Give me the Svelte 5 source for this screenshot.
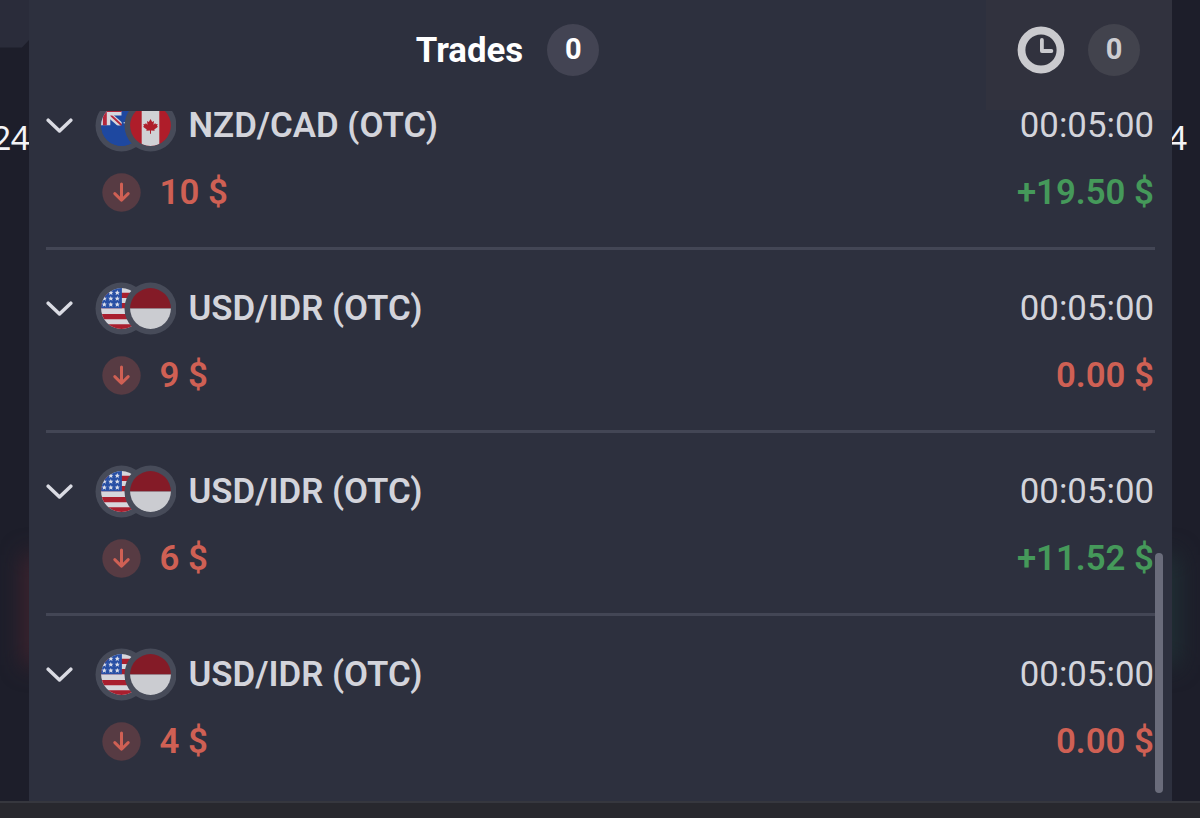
<script>
  const trades = [
    { pair: 'NZD/CAD (OTC)', flags: ['nz', 'ca'], time: '00:05:00', amount: '10 $', result: '+19.50 $', won: true },
    { pair: 'USD/IDR (OTC)', flags: ['us', 'id'], time: '00:05:00', amount: '9 $', result: '0.00 $', won: false },
    { pair: 'USD/IDR (OTC)', flags: ['us', 'id'], time: '00:05:00', amount: '6 $', result: '+11.52 $', won: true },
    { pair: 'USD/IDR (OTC)', flags: ['us', 'id'], time: '00:05:00', amount: '4 $', result: '0.00 $', won: false }
  ];
  const stars = [0, 1, 2].flatMap((r) => [0, 1, 2].map((c) => ({ x: 104.8 + c * 6.5, y: 292.2 + r * 5.9 })));
</script>

<div class="screen">
  <div class="main">
    <aside class="side left">
      <div class="tab"><svg width="29" height="48" viewBox="0 0 29 48"><path d="M0 0H29V40L22 47.5H0Z" fill="#2a2c3a" /></svg></div>
      <span class="axis">24</span>
      <div class="glow red"></div>
    </aside>

    <section class="panel">
      <header>
        <div class="title"><h1>Trades</h1><span class="count">0</span></div>
        <div class="pending">
          <svg width="48" height="48" viewBox="0 0 48 48">
            <circle cx="24" cy="24" r="19.5" fill="none" stroke="#cacace" stroke-width="7.8" />
            <path d="M24.9 14V25H34.4" fill="none" stroke="#cacace" stroke-width="3.8" stroke-linecap="round" stroke-linejoin="round" />
          </svg>
          <span class="count dim">0</span>
        </div>
      </header>

      <div class="viewport">
        <ul>
          {#each trades as t, i}
            <li>
              <div class="line top">
                <svg class="chevron" width="28" height="16" viewBox="0 0 28 16"><path d="M2.2 2.2L13.5 13L24.8 2.2" fill="none" stroke="#dadbe3" stroke-width="3.5" stroke-linecap="round" stroke-linejoin="round" /></svg>
                <svg class="flags" width="81" height="53" viewBox="95.5 281.5 81 53">
                  <defs>
                    <clipPath id="l{i}"><circle cx="122" cy="308" r="20.4" /></clipPath>
                    <clipPath id="r{i}"><circle cx="151" cy="308" r="20.4" /></clipPath>
                  </defs>
                  <circle cx="122" cy="308" r="26" fill="#474b59" />
                  <g clip-path="url(#l{i})">
                    {#if t.flags[0] === 'us'}
                      <path d="M101 287h42v42h-42z" fill="#d6d6dc" />
                      <path d="M101 292.2h42v5.2h-42zM101 302.6h42v5.2h-42zM101 313.4h42v5.3h-42zM101 323.8h42v5.2h-42z" fill="#a91f2f" />
                      <path d="M101 287h21.4v20.8H101z" fill="#2950a5" />
                      {#each stars as s}
                        <path transform="translate({s.x} {s.y})" d="M0-2.6L.75-.9L2.6-.8L1.2.35L1.65 2.2L0 1.2L-1.65 2.2L-1.2.35L-2.6-.8L-.75-.9Z" fill="#d9dce8" />
                      {/each}
                    {:else}
                      <path d="M101 287h42v42h-42z" fill="#1e48a0" />
                      <path d="M107 295L123 309" stroke="#d6d6dc" stroke-width="5.6" />
                      <path d="M110 296.5L124 309.5" stroke="#b5283c" stroke-width="1.8" />
                      <path d="M101 293.5h21.2v4.4H101zM101 287h9.8v21h-9.8z" fill="#d6d6dc" />
                      <path d="M101 290h21.2v4.6H101zM103.4 287h3.9v21h-3.9z" fill="#b5283c" />
                      <path d="M122.2 287h21v42h-21zM101 308h42v21h-42z" fill="#1e48a0" />
                      <circle cx="124.8" cy="305.3" r=".8" fill="#d6d6dc" />
                    {/if}
                  </g>
                  <circle cx="151" cy="308" r="26" fill="#474b59" />
                  <g clip-path="url(#r{i})">
                    {#if t.flags[1] === 'id'}
                      <path d="M130 287h42v21h-42z" fill="#841b27" />
                      <path d="M130 308h42v21h-42z" fill="#cbccd1" />
                    {:else}
                      <path d="M130 287h42v42h-42z" fill="#af1d2a" />
                      <path d="M142.2 287h17.6v42h-17.6z" fill="#d0d1d5" />
                      <path d="M151 301.4l1.7 3 1.8-.8-.5 3.6 1.8-1.7.4 1.3 2-.3-.7 2 1 .7-3.7 2.8.4 1.3-3.7-.4v3.4h-1v-3.4l-3.7.4.4-1.3-3.7-2.8 1-.7-.7-2 2 .3.4-1.3 1.8 1.7-.5-3.6 1.8.8z" fill="#af1d2a" />
                    {/if}
                  </g>
                </svg>
                <span class="pair">{t.pair}</span>
                <span class="time">{t.time}</span>
              </div>
              <div class="line bottom">
                <svg class="arrow" width="39" height="39" viewBox="0 0 39 39"><circle cx="19.5" cy="19.5" r="19.2" fill="#573b43" /><path d="M19.5 11V27M12.8 20.6L19.5 27.2L26.2 20.6" fill="none" stroke="#cf6054" stroke-width="3" stroke-linecap="round" stroke-linejoin="round" /></svg>
                <span class="amount">{t.amount}</span>
                <span class="result" class:won={t.won}>{t.result}</span>
              </div>
            </li>
          {/each}
        </ul>
        <div class="scrollbar"></div>
      </div>
    </section>

    <aside class="side right">
      <span class="axis">4</span>
      <div class="glow green"></div>
    </aside>
  </div>
  <footer></footer>
</div>

<style>
  :global(body) { margin: 0; background: #1d1e2a; }
  .screen { width: 1200px; height: 818px; display: flex; flex-direction: column; overflow: hidden; font-family: Roboto, sans-serif; }
  .main { height: 801px; display: grid; grid-template-columns: 29px 1143px 28px; }
  footer { flex: 1; background: #28282e; border-top: 2px solid #36373e; box-sizing: border-box; }
  .side { position: relative; overflow: hidden; background: #1d1e2a; display: flex; flex-direction: column; }
  .left { align-items: flex-end; }
  .tab { height: 48px; }
  .tab svg { display: block; }
  .axis { color: #f4f4f7; font: 400 33.5px/40px "Noto Sans", sans-serif; letter-spacing: -0.8px; margin-top: 69px; }
  .right .axis { margin: 117px 0 0 -4px; }
  .glow { position: absolute; width: 20px; height: 110px; top: 555px; filter: blur(12px); }
  .glow.red { left: 25px; background: #48242e; }
  .glow.green { right: 24px; background: #213638; }
  .panel { background: #2d303e; display: flex; flex-direction: column; min-width: 0; }
  header { height: 111px; display: flex; justify-content: space-between; }
  .title { width: 957px; height: 100px; display: flex; align-items: center; justify-content: center; gap: 24px; }
  h1 { margin: 0; color: #fff; font-size: 34.8px; font-weight: 700; line-height: 41px; }
  .count { width: 52px; height: 52px; border-radius: 50%; background: #434453; color: #fff; font-size: 29px; font-weight: 700; line-height: 51px; text-align: center; }
  .count.dim { background: #42434d; color: #cdcdd1; }
  .pending { width: 186px; height: 110px; padding: 0 32px 10px 31px; box-sizing: border-box; background: #31323e; display: flex; align-items: center; justify-content: space-between; }
  .viewport { position: relative; flex: 1; overflow: hidden; }
  ul { list-style: none; margin: -44px 17px 0; padding: 0; }
  li { height: 183px; box-sizing: border-box; padding: 31px 1px 0 0; border-bottom: 3px solid #434655; }
  li:last-child { border-color: transparent; }
  .line { display: flex; align-items: center; white-space: nowrap; font-size: 34.8px; }
  .top { height: 54px; }
  .chevron, .flags { margin-top: 1px; }
  .bottom { height: 40px; margin-top: 20px; padding-left: 56.4px; }
  .arrow { margin-top: 1px; }
  .flags { margin-left: 21.3px; }
  .pair { margin-left: 12.2px; color: #d3d4db; font-weight: 600; }
  .time, .result { margin-left: auto; }
  .time { color: #d3d4db; font-weight: 400; }
  .amount { margin-left: 18.2px; font-weight: 600; color: #cf6054; }
  .result { color: #cf6054; font-weight: 600; }
  .result.won { color: #45995a; }
  .scrollbar { position: absolute; right: 9px; top: 442px; width: 8px; height: 240px; border-radius: 4px; background: #6a6c7b; }
</style>
